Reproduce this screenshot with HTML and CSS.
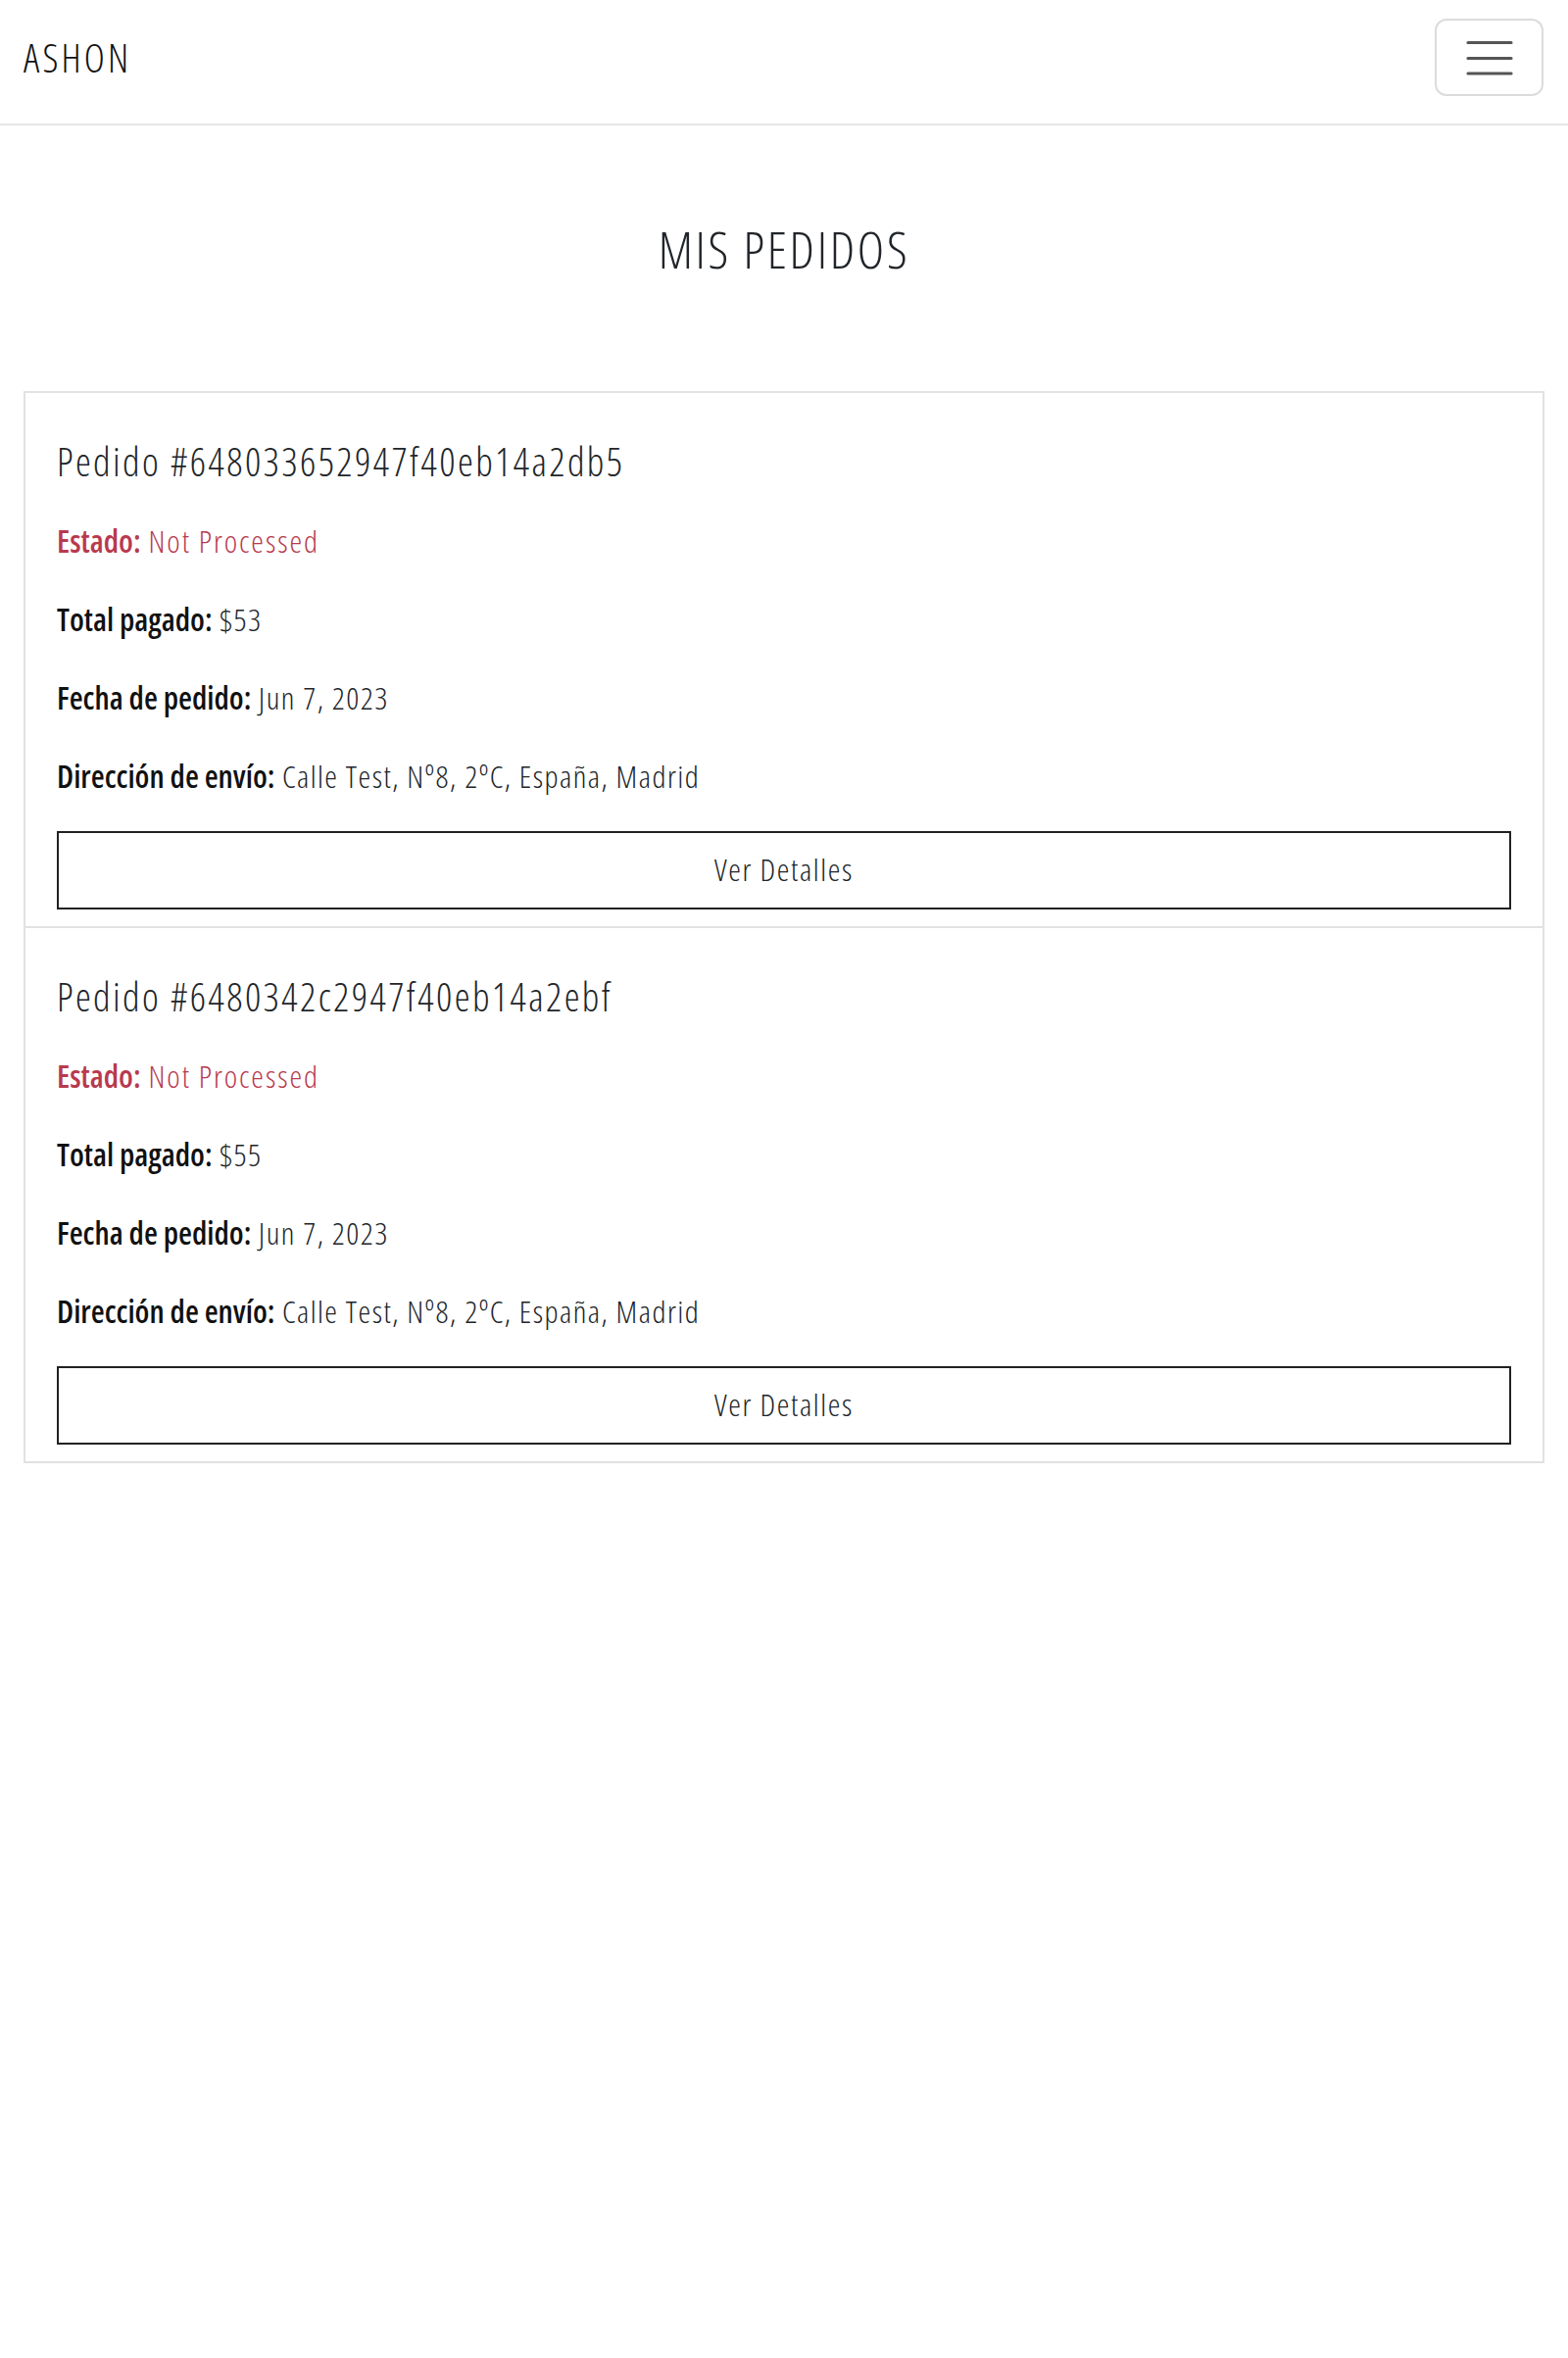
FILE: index.html
```html
<!DOCTYPE html>
<html lang="es">
<head>
<meta charset="utf-8">
<title>Mis pedidos - ASHON</title>
<link rel="stylesheet" href="styles.css">
</head>
<body>
<nav class="navbar">
  <a class="brand" href="#">ASHON</a>
  <button class="toggler" type="button" aria-label="Menú">
    <svg class="toggler-icon" width="48" height="36" viewBox="0 0 48 36">
      <path d="M2 2.5H46M2 18.5H46M2 34H46" stroke="#555" stroke-width="3.2" stroke-linecap="round" fill="none"/>
    </svg>
  </button>
</nav>

<main class="container">
  <h1 class="page-title">MIS PEDIDOS</h1>

  <section class="orders">
    <article class="order">
      <h2 class="order-title">Pedido #648033652947f40eb14a2db5</h2>
      <p class="line status"><b>Estado:</b> Not Processed</p>
      <p class="line"><b>Total pagado:</b> $53</p>
      <p class="line"><b>Fecha de pedido:</b> Jun 7, 2023</p>
      <p class="line"><b>Dirección de envío:</b> Calle Test, Nº8, 2ºC, España, Madrid</p>
      <button class="btn-details" type="button">Ver Detalles</button>
    </article>
    <article class="order">
      <h2 class="order-title">Pedido #6480342c2947f40eb14a2ebf</h2>
      <p class="line status"><b>Estado:</b> Not Processed</p>
      <p class="line"><b>Total pagado:</b> $55</p>
      <p class="line"><b>Fecha de pedido:</b> Jun 7, 2023</p>
      <p class="line"><b>Dirección de envío:</b> Calle Test, Nº8, 2ºC, España, Madrid</p>
      <button class="btn-details" type="button">Ver Detalles</button>
    </article>
  </section>
</main>
</body>
</html>
```
FILE: styles.css
```css
* { box-sizing: border-box; }

body {
  margin: 0;
  background: #fff;
  color: #212529;
  font-family: "Open Sans", "DejaVu Sans", sans-serif;
  font-stretch: condensed;
  font-weight: 300;
  font-size: 32px;
  line-height: 48px;
  letter-spacing: 0.045em;
}

.navbar {
  display: flex;
  align-items: center;
  justify-content: space-between;
  padding: 19px 25px 28px 24px;
  border-bottom: 2px solid #e6e6e6;
}

.brand {
  font-size: 40px;
  line-height: 48px;
  font-weight: 300;
  letter-spacing: 0.08em;
  color: #111;
  text-decoration: none;
}

.toggler {
  width: 111px;
  height: 79px;
  padding: 0;
  background: #fff;
  border: 2px solid #dcdcdc;
  border-radius: 12px;
  display: flex;
  align-items: center;
  justify-content: center;
}

.toggler-icon { display: block; }

.container {
  padding: 0 24px;
}

.page-title {
  margin: 95px 0 114px;
  text-align: center;
  font-size: 52px;
  line-height: 62px;
  font-weight: 300;
  letter-spacing: 0.052em;
  color: #212529;
}

.orders {
  border: 2px solid #e2e2e2;
}

.order {
  padding: 46px 32px 17px;
}

.order + .order {
  border-top: 2px solid #e2e2e2;
}

.order-title {
  margin: 0 0 33px;
  font-size: 40px;
  line-height: 48px;
  font-weight: 300;
  letter-spacing: 0.06em;
  color: #212529;
}

.line {
  margin: 0 0 32px;
}

.line b {
  font-weight: 600;
  letter-spacing: 0;
  color: #111;
}

.status {
  letter-spacing: 0.06em;
}

.status,
.status b {
  color: #b83a4e;
}

.btn-details {
  display: block;
  width: 100%;
  height: 80px;
  padding: 13px 0 15px;
  background: #fff;
  border: 2px solid #222;
  border-radius: 0;
  font-family: inherit;
  font-stretch: condensed;
  font-size: 32px;
  line-height: 48px;
  font-weight: 300;
  letter-spacing: 0.05em;
  color: #212529;
  text-align: center;
}
```
